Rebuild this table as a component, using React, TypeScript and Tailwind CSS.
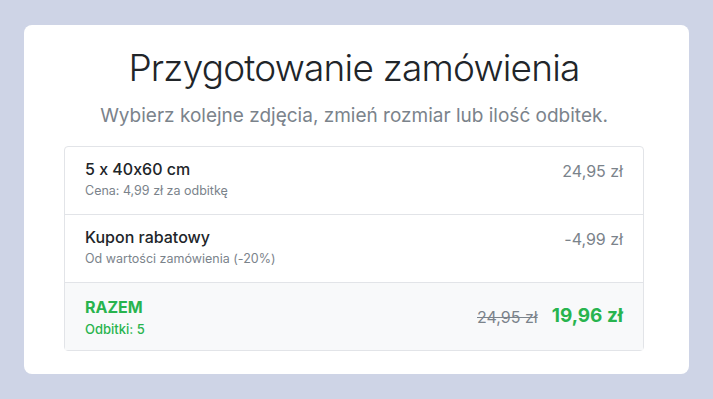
import React from 'react'

const rows = [
  { title: '5 x 40x60 cm', note: 'Cena: 4,99 zł za odbitkę', price: '24,95 zł' },
  { title: 'Kupon rabatowy', note: 'Od wartości zamówienia (-20%)', price: '-4,99 zł' },
]

export default function App() {
  return (
    <div className="min-h-screen bg-[#ced4e6] px-6 pt-[25px] pb-[25px] font-['Inter',sans-serif] [font-feature-settings:'calt'_0]">
      <div className="rounded-lg bg-white pl-10 pr-[45px] pt-[21px] pb-[23px]">
        <h1 className="text-center text-[37px] font-light leading-[44px] tracking-[-0.8px] text-[#212529]">
          Przygotowanie zamówienia
        </h1>
        <p className="mt-3 text-center text-[19px] leading-[27px] text-[#7b838b]">
          Wybierz kolejne zdjęcia, zmień rozmiar lub ilość odbitek.
        </p>

        {/* Order summary list */}
        <div className="mt-[17px] rounded border border-[#e2e4e8]">
          {rows.map((row, i) => (
            <div
              key={i}
              className="flex items-start justify-between border-b border-[#e2e4e8] px-5 pt-[10px] h-[68px]"
            >
              <div>
                <div className="text-[16px] font-medium leading-6 text-[#212529]">{row.title}</div>
                <div className="text-[12.5px] leading-5 text-[#7b838b]">{row.note}</div>
              </div>
              <div className="pt-[2px] text-[16px] leading-6 text-[#7b838b]">{row.price}</div>
            </div>
          ))}
          <div className="flex items-center justify-between bg-[#f8f9fa] px-5 h-[67px]">
            <div>
              <div className="text-[16px] font-bold leading-6 text-[#28b44e]">RAZEM</div>
              <div className="text-[13px] font-medium leading-5 text-[#28b44e]">Odbitki: 5</div>
            </div>
            <div className="flex items-center gap-3.5">
              <span className="text-[16px] text-[#7b838b] line-through">24,95 zł</span>
              <span className="text-[19px] font-bold text-[#28b44e]">19,96 zł</span>
            </div>
          </div>
        </div>
      </div>
    </div>
  )
}
